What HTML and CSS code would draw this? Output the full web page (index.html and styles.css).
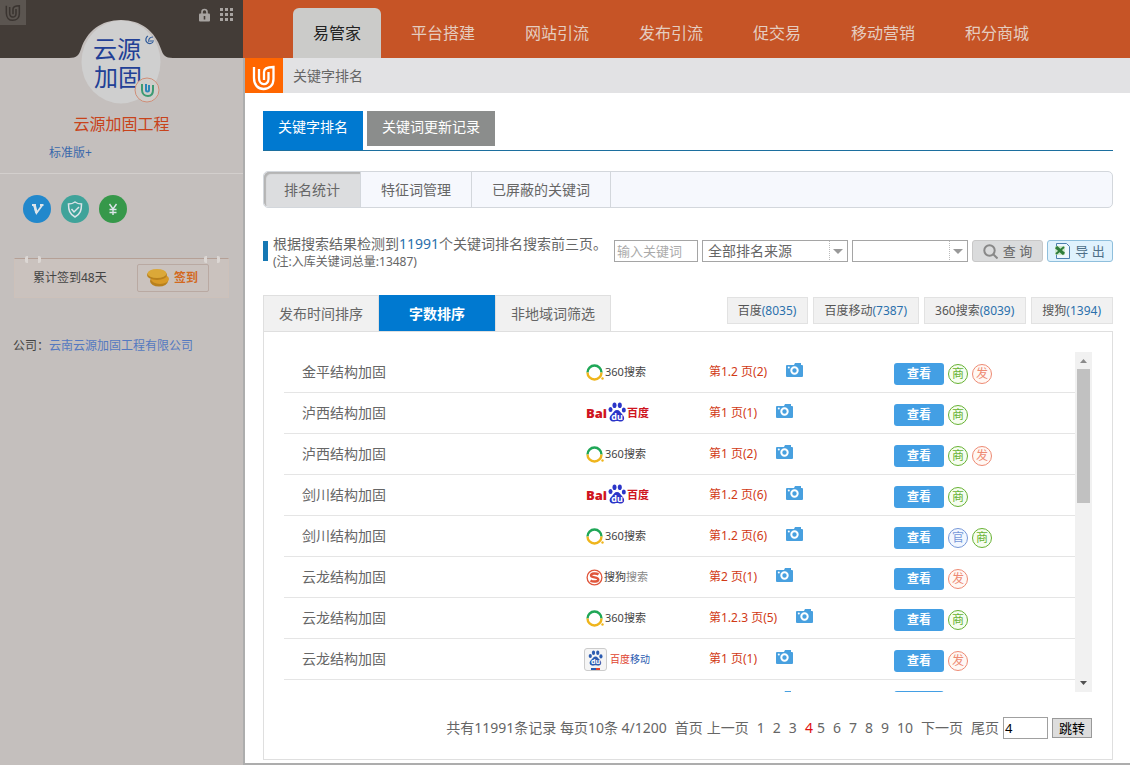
FILE: index.html
```html
<!DOCTYPE html>
<html lang="zh-CN">
<head>
    <meta charset="UTF-8">
    <meta name="viewport" content="width=device-width, initial-scale=1.0">
    <title>关键字排名</title>
    <link rel="stylesheet" href="styles.css">
</head>

<body>
    <!-- shared icons -->
    <svg class="sprite" aria-hidden="true">
        <symbol id="logo-u" viewBox="0 0 24 26">
            <path d="M2 2v11c0 7 4 11 9.500 11c6 0 10-4 10-10V2c-6 0-9.500 1-9.500 5v8M7 4v9c0 8 9.500 8 9.500 1V7" fill="none" stroke="currentColor" stroke-width="2.300"/>
        </symbol>
        <symbol id="camera" viewBox="0 0 17 14">
            <path d="M1 2h7l1-2h6v2h1a1 1 0 0 1 1 1v10a1 1 0 0 1-1 1H1a1 1 0 0 1-1-1V3a1 1 0 0 1 1-1z" fill="#48a0df"/>
            <circle cx="8.500" cy="7.500" r="3.200" fill="none" stroke="#fff" stroke-width="2"/>
            <circle cx="2.800" cy="4.500" r="1" fill="#fff"/>
        </symbol>
        <symbol id="logo-360" viewBox="0 0 18 17">
            <path d="M1.500 8.500a7 7 0 0 1 14 0" fill="none" stroke="#1fa757" stroke-width="2.400"/>
            <path d="M1.500 8.500a7 7 0 0 0 14 0" fill="none" stroke="#efb51c" stroke-width="2.400"/>
            <circle cx="16.500" cy="14.500" r="1.200" fill="#efb51c"/>
        </symbol>
        <symbol id="paw" viewBox="0 0 18 20">
            <ellipse cx="2.500" cy="7.500" rx="2" ry="2.600"/>
            <ellipse cx="6.500" cy="3.300" rx="2" ry="2.800"/>
            <ellipse cx="11.800" cy="3.300" rx="2" ry="2.800"/>
            <ellipse cx="15.800" cy="8" rx="2" ry="2.600"/>
            <path d="M9 8c2.500 0 3 2 5 4c3 3 3 7-1 7.500c-2 .2-2-.5-4-.5s-2 .7-4 .5c-4-.5-4.500-4.500-1-7.500c2-2 2.500-4 5-4z"/>
            <text x="9" y="17.500" text-anchor="middle" fill="#fff" class="paw-text">du</text>
        </symbol>
        <symbol id="logo-sogou" viewBox="0 0 18 17">
            <circle cx="8.500" cy="8.500" r="7.400" fill="none" stroke="#e0563c" stroke-width="1.300"/>
            <path d="M12.500 5.500c-2-1.500-7.500-1.500-7.500 1c0 2.500 7.300 1.300 7.300 4c0 2.500-5.500 2.500-7.800 1" fill="none" stroke="#e0563c" stroke-width="2.400"/>
        </symbol>
    </svg>

    <div class="layout">
        <aside class="sidebar">
            <div class="side-head">
                <span class="side-logo"><svg width="16" height="18"><use href="#logo-u"/></svg></span>
                <span class="side-tools">
                    <svg width="11" height="14" viewBox="0 0 11 14"><path d="M3 6V4a2.500 2.500 0 0 1 5 0v2" fill="none" stroke="#a8a4a1" stroke-width="1.600"/><rect y="5.500" width="11" height="8" rx="1" fill="#a8a4a1"/><path d="M5.500 8v3.500" stroke="#433c37" stroke-width="1.600"/></svg>
                    <svg width="14" height="14" viewBox="0 0 14 14" fill="#a8a4a1"><path d="M0 0h3v3H0zM5 0h3v3H5zM10 0h3v3h-3zM0 5h3v3H0zM5 5h3v3H5zM10 5h3v3h-3zM0 10h3v3H0zM5 10h3v3H5zM10 10h3v3h-3z"/></svg>
                </span>
            </div>
            <svg class="avatar" width="104" height="86" viewBox="0 0 104 86">
                <path d="M0 38c8 0 10-3 12-9C18 11 32 0 52 0s34 11 40 29c2 6 4 9 12 9z" fill="#c4bfbd"/>
                <ellipse cx="52" cy="42" rx="39.500" ry="41.500" fill="#cfcfcf"/>
                <g class="avatar-text" fill="#223f96">
                    <text x="24" y="38">云源</text>
                    <text x="25" y="66">加固</text>
                </g>
                <path d="M79 16a4 4 0 1 0 5 6M80 22c-1-3 1-5 4-5M81 21h4" fill="none" stroke="#2f5a9a" stroke-width="1.200"/>
                <circle cx="78" cy="70" r="12" fill="#cfcdca" stroke="#cf8e78"/>
                <path d="M73 64v6c0 4 3 6 6 6s5-2 5-6v-5" fill="none" stroke="#3d9a72" stroke-width="2"/>
                <path d="M77 64v6c0 2 3 2 3 0v-5" fill="none" stroke="#2b86b8" stroke-width="2"/>
            </svg>
            <h1 class="shop-name">云源加固工程</h1>
            <a class="version" href="#">标准版+</a>

            <div class="badges">
                <svg width="28" height="28" viewBox="0 0 28 28"><circle cx="14" cy="14" r="14" fill="#2288cc"/><path d="M9 10h4M17 10h3.500M11 10l2.500 8L19 10.500" fill="none" stroke="#dde5ea" stroke-width="1.800"/><path d="M11.500 10l2 8" stroke="#dde5ea" stroke-width="2.600"/></svg>
                <svg width="28" height="28" viewBox="0 0 28 28"><circle cx="14" cy="14" r="14" fill="#3fa39a"/><path d="M14 7c2 1.500 4 2 6.500 2c0 6-1 10-6.500 13c-5.500-3-6.500-7-6.500-13C10 9 12 8.500 14 7zM10.500 14l2.500 3l5-5" fill="none" stroke="#dde5ea" stroke-width="1.500"/></svg>
                <svg width="28" height="28" viewBox="0 0 28 28"><circle cx="14" cy="14" r="14" fill="#36984a"/><path d="M10.500 9l3.500 5l3.500-5M14 14v6M10.500 14.500h7M10.500 17.500h7" fill="none" stroke="#dde5ea" stroke-width="1.400"/></svg>
            </div>

            <div class="sign">
                <span>累计签到48天</span>
                <button type="button" class="btn-sign">
                    <svg width="22" height="20" viewBox="0 0 22 20"><ellipse cx="12" cy="13" rx="9" ry="5.500" fill="#b8801c"/><ellipse cx="13" cy="11" rx="9" ry="5" fill="#d99a26"/><ellipse cx="10" cy="7" rx="10" ry="5" fill="#b8801c"/><ellipse cx="10" cy="5.500" rx="9.500" ry="4.500" fill="#dba838"/></svg>
                    签到
                </button>
            </div>

            <p class="company">公司：<a href="#">云南云源加固工程有限公司</a></p>
        </aside>

        <main class="main">
            <nav class="topnav">
                <a href="#" class="active">易管家</a>
                <a href="#">平台搭建</a>
                <a href="#">网站引流</a>
                <a href="#">发布引流</a>
                <a href="#">促交易</a>
                <a href="#">移动营销</a>
                <a href="#">积分商城</a>
            </nav>

            <div class="page">
                <div class="crumb">
                    <span class="crumb-logo"><svg width="24" height="26"><use href="#logo-u"/></svg></span>
                    关键字排名
                </div>

                <div class="content">
                    <div class="tabs">
                        <a href="#" class="active">关键字排名</a>
                        <a href="#">关键词更新记录</a>
                    </div>

                    <div class="subtabs">
                        <a href="#" class="active">排名统计</a>
                        <a href="#">特征词管理</a>
                        <a href="#">已屏蔽的关键词</a>
                    </div>

                    <div class="toolbar">
                        <div class="summary">
                            <p>根据搜索结果检测到<b>11991</b>个关键词排名搜索前三页。</p>
                            <small>(注:入库关键词总量:13487)</small>
                        </div>
                        <form class="filter">
                            <input type="text" class="keyword" placeholder="输入关键词" aria-label="输入关键词">
                            <select class="source" aria-label="排名来源"><option>全部排名来源</option></select>
                            <select class="word" aria-label="特征词"><option></option></select>
                            <button type="button" class="btn-search">
                                <svg width="15" height="15" viewBox="0 0 15 15" fill="none" stroke="#888" stroke-width="2"><circle cx="6.500" cy="6.500" r="5.200"/><path d="M10.500 10.500l4 4"/></svg>
                                查 询
                            </button>
                            <button type="button" class="btn-export">
                                <svg width="15" height="16" viewBox="0 0 15 16"><path d="M1.500.500h10l3 3v12h-13z" fill="#eef7fd" stroke="#4c7fae"/><path d="M0 3h10v9H0z" fill="#cfe8cf"/><path d="M1 4l8 7" stroke="#2f7d3b" stroke-width="3"/><path d="M9 4l-8 7" stroke="#2f7d3b" stroke-width="2"/></svg>
                                导 出
                            </button>
                        </form>
                    </div>

                    <div class="sortbar">
                        <div class="sort">
                            <a href="#">发布时间排序</a>
                            <a href="#" class="active">字数排序</a>
                            <a href="#">非地域词筛选</a>
                        </div>
                        <div class="counts">
                            <a href="#">百度<b>(8035)</b></a>
                            <a href="#">百度移动<b>(7387)</b></a>
                            <a href="#">360搜索<b>(8039)</b></a>
                            <a href="#">搜狗<b>(1394)</b></a>
                        </div>
                    </div>

                    <div class="panel">
                        <div class="scroll">
                            <table class="list">
                                <colgroup>
                                    <col>
                                    <col class="col-engine">
                                    <col class="col-rank">
                                    <col class="col-action">
                                </colgroup>
                                <tbody>
                                    <tr>
                                        <td>金平结构加固</td>
                                        <td><span class="engine"><svg width="18" height="17"><use href="#logo-360"/></svg>360搜索</span></td>
                                        <td><a class="rank" href="#">第1.2 页(2) <svg width="17" height="14"><use href="#camera"/></svg></a></td>
                                        <td><div class="actions"><button type="button">查看</button><i class="shang">商</i><i class="fa">发</i></div></td>
                                    </tr>
                                    <tr>
                                        <td>泸西结构加固</td>
                                        <td><span class="engine baidu"><strong>Bai</strong><svg width="18" height="20"><use href="#paw"/></svg>百度</span></td>
                                        <td><a class="rank" href="#">第1 页(1) <svg width="17" height="14"><use href="#camera"/></svg></a></td>
                                        <td><div class="actions"><button type="button">查看</button><i class="shang">商</i></div></td>
                                    </tr>
                                    <tr>
                                        <td>泸西结构加固</td>
                                        <td><span class="engine"><svg width="18" height="17"><use href="#logo-360"/></svg>360搜索</span></td>
                                        <td><a class="rank" href="#">第1 页(2) <svg width="17" height="14"><use href="#camera"/></svg></a></td>
                                        <td><div class="actions"><button type="button">查看</button><i class="shang">商</i><i class="fa">发</i></div></td>
                                    </tr>
                                    <tr>
                                        <td>剑川结构加固</td>
                                        <td><span class="engine baidu"><strong>Bai</strong><svg width="18" height="20"><use href="#paw"/></svg>百度</span></td>
                                        <td><a class="rank" href="#">第1.2 页(6) <svg width="17" height="14"><use href="#camera"/></svg></a></td>
                                        <td><div class="actions"><button type="button">查看</button><i class="shang">商</i></div></td>
                                    </tr>
                                    <tr>
                                        <td>剑川结构加固</td>
                                        <td><span class="engine"><svg width="18" height="17"><use href="#logo-360"/></svg>360搜索</span></td>
                                        <td><a class="rank" href="#">第1.2 页(6) <svg width="17" height="14"><use href="#camera"/></svg></a></td>
                                        <td><div class="actions"><button type="button">查看</button><i class="guan">官</i><i class="shang">商</i></div></td>
                                    </tr>
                                    <tr>
                                        <td>云龙结构加固</td>
                                        <td><span class="engine sogou"><svg width="18" height="17"><use href="#logo-sogou"/></svg>搜狗<em>搜索</em></span></td>
                                        <td><a class="rank" href="#">第2 页(1) <svg width="17" height="14"><use href="#camera"/></svg></a></td>
                                        <td><div class="actions"><button type="button">查看</button><i class="fa">发</i></div></td>
                                    </tr>
                                    <tr>
                                        <td>云龙结构加固</td>
                                        <td><span class="engine"><svg width="18" height="17"><use href="#logo-360"/></svg>360搜索</span></td>
                                        <td><a class="rank" href="#">第1.2.3 页(5) <svg width="17" height="14"><use href="#camera"/></svg></a></td>
                                        <td><div class="actions"><button type="button">查看</button><i class="shang">商</i></div></td>
                                    </tr>
                                    <tr>
                                        <td>云龙结构加固</td>
                                        <td><span class="engine mobile"><span class="app"><svg width="16" height="18"><use href="#paw"/></svg></span>百度<em>移动</em></span></td>
                                        <td><a class="rank" href="#">第1 页(1) <svg width="17" height="14"><use href="#camera"/></svg></a></td>
                                        <td><div class="actions"><button type="button">查看</button><i class="fa">发</i></div></td>
                                    </tr>
                                    <tr>
                                        <td></td>
                                        <td></td>
                                        <td><a class="rank" href="#">第1 页(1) <svg width="17" height="14"><use href="#camera"/></svg></a></td>
                                        <td><div class="actions"><button type="button">查看</button></div></td>
                                    </tr>
                                </tbody>
                            </table>
                            <div class="scrollbar">
                                <span class="arrow up"></span>
                                <span class="thumb"></span>
                                <span class="arrow down"></span>
                            </div>
                        </div>

                        <div class="pager">
                            <span>共有11991条记录 每页10条 4/1200</span>
                            <a href="#" class="gap">首页</a>
                            <a href="#">上一页</a>
                            <a href="#" class="gap">1</a>
                            <a href="#" class="gap">2</a>
                            <a href="#" class="gap">3</a>
                            <a href="#" class="gap current">4</a>
                            <a href="#">5</a>
                            <a href="#" class="gap">6</a>
                            <a href="#" class="gap">7</a>
                            <a href="#" class="gap">8</a>
                            <a href="#" class="gap">9</a>
                            <a href="#" class="gap">10</a>
                            <a href="#" class="gap">下一页</a>
                            <a href="#" class="gap">尾页</a>
                            <input type="text" value="4" aria-label="页码">
                            <button type="button">跳转</button>
                        </div>
                    </div>
                </div>
            </div>
        </main>
    </div>
</body>
</html>
```
FILE: styles.css
```css
* {
    box-sizing: border-box;
}
body {
    margin: 0;
    font-family: "Noto Sans", "Noto Sans CJK SC", sans-serif;
    font-size: 14px;
    line-height: 20px;
    color: #666;
    background: #fff;
}
a {
    color: inherit;
    text-decoration: none;
}
p, h1 {
    margin: 0;
}
b {
    font-weight: normal;
    color: #2a70ac;
}
i, em {
    font-style: normal;
}
svg {
    flex: none;
}
input, select, button {
    font: inherit;
    color: inherit;
    margin: 0;
}
button {
    cursor: pointer;
}
.sprite {
    position: absolute;
    width: 0;
    height: 0;
}
.layout {
    display: flex;
}

/* sidebar */
.sidebar {
    flex: none;
    width: 243px;
    background: #c4bfbd;
    font-size: 12px;
}
.side-head {
    display: flex;
    justify-content: space-between;
    height: 58px;
    background: #433c37;
}
.side-logo {
    display: flex;
    align-items: center;
    justify-content: center;
    width: 26px;
    height: 25px;
    background: #5b5550;
    color: #3a3430;
}
.side-tools {
    display: flex;
    gap: 10px;
    padding: 8px 9px;
}
.avatar {
    display: block;
    margin: -38px auto 0 69px;
}
.avatar-text {
    font-size: 24px;
}
.shop-name {
    margin-top: 7px;
    text-align: center;
    font-size: 16px;
    line-height: 22px;
    font-weight: normal;
    color: #c8431b;
}
.version {
    display: block;
    padding: 8px 0 10px 49px;
    border-bottom: 1px solid #d3cfcd;
    color: #3a68ab;
}
.badges {
    display: flex;
    gap: 10px;
    padding: 21px 23px 0;
}
.sign {
    position: relative;
    display: flex;
    justify-content: space-between;
    align-items: center;
    height: 40px;
    margin: 35px 14px 0 14px;
    padding: 0 19px 0 18px;
    border: 1px solid #cdc1ba;
    border-top-color: #b5a096;
    background: #cac2be;
    color: #444;
}
/* binder rings on the top edge */
.sign::before, .sign::after {
    content: "";
    position: absolute;
    top: -3px;
    width: 10px;
    height: 7px;
    border: solid #dcd7d4;
    border-width: 0 3px;
    border-radius: 2px;
}
.sign::before {
    left: 10px;
}
.sign::after {
    right: 8px;
}
.btn-sign {
    display: flex;
    align-items: center;
    gap: 5px;
    height: 28px;
    padding: 0 10px 0 9px;
    border: 1px solid #b9a9a2;
    border-radius: 2px;
    background: none;
    color: #d2691e;
    font-weight: bold;
}
.company {
    padding: 38px 13px 0;
    color: #444;
}
.company a {
    color: #5479c0;
}

/* top navigation */
.main {
    flex: 1;
    min-width: 0;
    background: #adadad;
}
.topnav {
    display: flex;
    align-items: flex-end;
    height: 58px;
    padding-left: 45px;
    background: #c65426;
    font-size: 16px;
    color: #e5cdc0;
}
.topnav a {
    padding: 0 25px;
    line-height: 50px;
    white-space: nowrap;
}
.topnav .active {
    margin: 0 5px;
    padding: 0 20px;
    border-radius: 6px 6px 0 0;
    background: #cbcbc9;
    color: #222;
}
.page {
    margin: 0 0 2px 2px;
    background: #fff;
}
.crumb {
    display: flex;
    align-items: center;
    gap: 10px;
    height: 35px;
    background: #e2e2e4;
}
.crumb-logo {
    display: flex;
    align-items: flex-end;
    justify-content: center;
    width: 38px;
    height: 35px;
    padding-bottom: 2px;
    background: #ff6600;
    color: #fff;
}
.content {
    padding: 18px 17px 3px 18px;
}

/* tabs */
.tabs {
    display: flex;
    align-items: flex-start;
    gap: 4px;
    border-bottom: 1px solid #1c6f9f;
    color: #fff;
}
.tabs a {
    height: 35px;
    padding: 6px 15px;
    background: #8b8d8c;
}
.tabs .active {
    height: 39px;
    background: #0079d0;
}
.subtabs {
    display: flex;
    height: 37px;
    margin-top: 20px;
    border: 1px solid #d3d7dc;
    border-radius: 5px;
    background: #f6f8fd;
    line-height: 35px;
}
.subtabs a {
    padding: 0 20px;
    border-right: 1px solid #d3d7dc;
}
.subtabs .active {
    border-radius: 5px 0 0 5px;
    background: #dcdddf;
    box-shadow: inset 2px 2px 1px #b4b4b4;
}

/* summary and filter */
.toolbar {
    display: flex;
    justify-content: space-between;
    align-items: flex-start;
    margin-top: 26px;
}
.summary {
    padding-left: 10px;
    background: linear-gradient(#1578b4, #1578b4) 0 7px / 5px 20px no-repeat;
    white-space: nowrap;
}
.summary small {
    display: block;
    font-size: 12px;
    line-height: 16px;
}
.filter {
    display: flex;
    gap: 4px;
    padding-top: 6px;
}
.filter input, .filter select, .filter button {
    height: 22px;
    line-height: 18px;
    border: 1px solid #a5a5a5;
    white-space: nowrap;
}
.keyword {
    width: 84px;
    padding: 0 2px;
    font-size: 13px;
}
.keyword::placeholder {
    color: #aaa;
}
.filter select {
    appearance: none;
    padding: 0 5px;
    border-radius: 0;
    background: #fff url("data:image/svg+xml,%3Csvg xmlns='http://www.w3.org/2000/svg' width='18' height='20'%3E%3Cpath d='M.5 0v20' stroke='%23bbb' stroke-dasharray='1 1'/%3E%3Cpath d='M4 8h10l-5 5z' fill='%23999'/%3E%3C/svg%3E") right center no-repeat;
}
.filter .source {
    width: 146px;
}
.filter .word {
    width: 116px;
}
.filter button {
    display: flex;
    align-items: center;
    justify-content: center;
    gap: 5px;
    padding: 0;
    border-radius: 3px;
    font-size: 13px;
}
.filter .btn-search {
    width: 71px;
    border-color: #c8c8c8;
    background: #dadbdc;
}
.filter .btn-export {
    width: 66px;
    border-color: #8fbfdc;
    background: #e0f2fd;
    color: #4f7088;
}

/* sort tabs and engine counts */
.sortbar {
    display: flex;
    justify-content: space-between;
    align-items: flex-start;
    margin-top: 25px;
}
.sort {
    display: flex;
    text-align: center;
}
.sort a {
    width: 116px;
    border: solid #dfdfdf;
    border-width: 1px 1px 0;
    background: #f1f1f1;
    line-height: 35px;
}
.sort .active {
    border-color: #0079d0;
    background: #0079d0;
    color: #fff;
    font-weight: bold;
}
.counts {
    display: flex;
    gap: 5px;
    padding-top: 2px;
    font-size: 12px;
    color: #555;
}
.counts a {
    padding: 0 11px 0 10px;
    border: 1px solid #e2e2e2;
    background: #f1f1f1;
    line-height: 25px;
}

/* keyword list */
.panel {
    padding: 20px;
    border: 1px solid #dfdfdf;
}
.scroll {
    display: flex;
    align-items: flex-start;
    height: 340px;
    overflow: hidden;
}
.list {
    flex: 1;
    table-layout: fixed;
    border-spacing: 0;
}
.col-engine { width: 123px; }
.col-rank { width: 185px; }
.col-action { width: 181px; }
.list td {
    height: 41px;
    padding: 0;
    border-bottom: 1px solid #e5e5e5;
}
.list td:first-child {
    padding-left: 18px;
}
.engine {
    display: flex;
    align-items: center;
    gap: 1px;
    font-size: 11px;
    color: #444;
}
.engine em {
    color: #888;
}
.sogou {
    gap: 0;
}
.baidu {
    font-weight: bold;
    color: #cf1420;
    fill: #2b35c8;
}
.baidu strong {
    font-size: 13px;
}
.baidu svg {
    margin-bottom: 3px;
}
.paw-text {
    font-size: 9px;
    font-weight: bold;
}
.mobile {
    gap: 3px;
    margin-left: -2px;
    font-size: 10px;
    color: #e0442f;
    fill: #2c5cb0;
}
.mobile em {
    margin-left: -3px;
    color: #2c5cb0;
}
.app {
    display: flex;
    align-items: center;
    justify-content: center;
    width: 23px;
    height: 23px;
    border: 1px solid #ccc;
    border-radius: 3px;
    background: linear-gradient(90deg, #2c5cb0 50%, #e0442f 50%) center 19px / 9px 2px no-repeat #f5f5f5;
}
.app svg {
    width: 15px;
    height: 16px;
    margin-bottom: 3px;
}
.rank {
    display: flex;
    align-items: center;
    gap: 19px;
    font-size: 12px;
    color: #d13a16;
}
.rank svg {
    margin-bottom: 4px;
}
.actions {
    display: flex;
    align-items: center;
    gap: 4px;
    padding-top: 3px;
    font-size: 12px;
}
.actions button {
    width: 50px;
    height: 22px;
    padding: 0;
    border: 0;
    border-radius: 3px;
    background: #439fe4;
    color: #fff;
    font-weight: bold;
}
.actions i {
    width: 20px;
    height: 20px;
    border: 1px solid;
    border-radius: 50%;
    line-height: 18px;
    text-align: center;
}
.shang { color: #67b233; background: #f6fdf0; }
.fa { color: #ee8a73; background: #fff8f4; }
.guan { color: #7597d8; background: #f2f7ff; }

.scrollbar {
    display: flex;
    flex-direction: column;
    align-items: center;
    width: 17px;
    height: 340px;
    background: #f1f1f1;
}
.arrow {
    width: 7px;
    height: 4px;
}
.up {
    margin: 7px 0 6px;
    background: #8a8a8a;
    clip-path: polygon(50% 0, 100% 100%, 0 100%);
}
.down {
    margin: auto 0 7px;
    background: #505050;
    clip-path: polygon(0 0, 100% 0, 50% 100%);
}
.thumb {
    width: 13px;
    height: 134px;
    background: #c1c1c1;
}

/* pager */
.pager {
    display: flex;
    justify-content: flex-end;
    align-items: center;
    gap: 4px;
    margin-top: 25px;
    white-space: nowrap;
}
.pager .gap {
    margin-left: 4px;
}
.pager .current {
    color: #e01010;
}
.pager input {
    width: 45px;
    height: 22px;
    padding: 0 1px;
    border: 1px solid #a0a0a0;
    font-size: 13px;
    color: #000;
}
.pager button {
    width: 40px;
    height: 20px;
    padding: 0;
    border: 1px solid #999;
    background: #ddd;
    font-size: 13px;
    line-height: 16px;
    color: #000;
}
```
